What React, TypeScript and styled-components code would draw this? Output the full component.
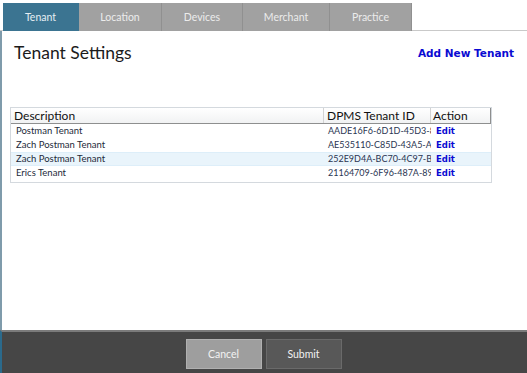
import React from "react";
import styled, { createGlobalStyle } from "styled-components";

const Global = createGlobalStyle`
  html, body { margin: 0; padding: 0; background: #ffffff; }
  body { font-family: Lato, "Open Sans", sans-serif; }
`;

const Page = styled.div`
  width: 527px;
  height: 373px;
  display: flex;
  flex-direction: column;
  overflow: hidden;
  background: #ffffff;
`;

const TabBar = styled.div`
  display: flex;
  height: 31px;
  padding: 3px 0 0 3px;
  box-sizing: border-box;
  border-bottom: 1px solid #c9c9c9;
`;

const Tab = styled.div<{ $active?: boolean; $w: number }>`
  width: ${(p) => p.$w}px;
  height: 28px;
  display: flex;
  align-items: center;
  justify-content: center;
  font-family: Lato, sans-serif;
  font-size: 10.5px;
  color: ${(p) => (p.$active ? "#e6eef3" : "#ececec")};
  background: ${(p) => (p.$active ? "#3b7491" : "#a1a1a1")};
  border-right: 1px solid ${(p) => (p.$active ? "#3b7491" : "#909090")};
  box-sizing: border-box;
`;

const Body = styled.div`
  flex: 1;
  display: flex;
  flex-direction: column;
  border-left: 2px solid #7f9bab;
  padding: 0 0 0 8px;
`;

const HeaderRow = styled.div`
  display: flex;
  justify-content: space-between;
  align-items: center;
  padding: 9px 13px 0 4px;
  height: 24px;
`;

const Title = styled.h1`
  margin: 0;
  font-family: Lato, sans-serif;
  font-weight: 400;
  font-size: 17.5px;
  color: #1b1b1b;
`;

const AddLink = styled.a`
  font-family: "DejaVu Sans", Verdana, sans-serif;
  font-weight: 700;
  font-size: 10.5px;
  color: #0a0ad2;
  text-decoration: none;
  margin-top: 2px;
`;

const Grid = styled.div`
  margin-top: 43px;
  width: 482px;
  border: 1px solid #d4d9de;
  box-sizing: border-box;
  padding-bottom: 2px;
`;

const cols = "313px 107px 60px";

const GridHead = styled.div`
  display: grid;
  grid-template-columns: ${cols};
  height: 16px;
  box-sizing: border-box;
  background: linear-gradient(#ffffff, #f1f2f3);
  border-bottom: 1px solid #8e8f8f;
`;

const HeadCell = styled.div<{ $last?: boolean }>`
  font-family: Lato, sans-serif;
  font-size: 12px;
  color: #111;
  padding-left: ${(p) => (p.$last ? 2 : 3)}px;
  line-height: 15px;
  border-right: 1px solid ${(p) => (p.$last ? "#8e8f8f" : "#d3d3d3")};
  white-space: nowrap;
  overflow: hidden;
`;

const Rows = styled.div`
  display: flex;
  flex-direction: column;
`;

const Row = styled.div<{ $sel?: boolean }>`
  display: grid;
  grid-template-columns: ${cols};
  height: 14px;
  box-sizing: border-box;
  align-items: center;
  background: ${(p) => (p.$sel ? "#e9f4fb" : "transparent")};
  border-top: 1px solid ${(p) => (p.$sel ? "#ddeef9" : "transparent")};
  border-bottom: 1px solid ${(p) => (p.$sel ? "#ddeef9" : "transparent")};
`;

const Cell = styled.div`
  font-family: Lato, sans-serif;
  font-size: 9.5px;
  line-height: 12px;
  color: #1d2a3a;
  padding-left: 5px;
  white-space: nowrap;
  overflow: hidden;
  text-overflow: clip;
`;

const IdCell = styled(Cell)`
  font-size: 9px;
  padding-left: 4px;
  color: #2a3552;
`;

const Edit = styled.a`
  font-family: "DejaVu Sans", Verdana, sans-serif;
  font-weight: 700;
  font-size: 8.5px;
  line-height: 12px;
  color: #0a0ad2;
  padding-left: 5px;
  text-decoration: none;
`;

const Footer = styled.div`
  height: 43px;
  background: #464646;
  border-top: 2px solid #7b7b7b;
  border-left: 2px solid #2b6a8c;
  display: flex;
  justify-content: center;
  align-items: center;
  gap: 4px;
  box-sizing: border-box;
  padding-top: 2px;
  padding-right: 2px;
`;

const Btn = styled.button<{ $primary?: boolean }>`
  width: 76px;
  height: 30px;
  font-family: Lato, sans-serif;
  font-size: 10.5px;
  color: #f2f2f2;
  background: ${(p) => (p.$primary ? "#585858" : "#9e9e9e")};
  border: 1px solid ${(p) => (p.$primary ? "#6a6a6a" : "#b0b0b0")};
  border-radius: 0;
  padding: 0;
`;

const tabs = [
  { label: "Tenant", w: 76, active: true },
  { label: "Location", w: 83 },
  { label: "Devices", w: 81 },
  { label: "Merchant", w: 87 },
  { label: "Practice", w: 82 },
];

const data = [
  { d: "Postman Tenant", id: "AADE16F6-6D1D-45D3-8E" },
  { d: "Zach Postman Tenant", id: "AE535110-C85D-43A5-A5" },
  { d: "Zach Postman Tenant", id: "252E9D4A-BC70-4C97-BB", sel: true },
  { d: "Erics Tenant", id: "21164709-6F96-487A-897" },
];

export default function App() {
  return (
    <Page>
      <Global />
      <TabBar>
        {tabs.map((t) => (
          <Tab key={t.label} $active={t.active} $w={t.w}>
            {t.label}
          </Tab>
        ))}
      </TabBar>
      <Body>
        <HeaderRow>
          <Title>Tenant Settings</Title>
          <AddLink>Add New Tenant</AddLink>
        </HeaderRow>
        <Grid>
          <GridHead>
            <HeadCell>Description</HeadCell>
            <HeadCell>DPMS Tenant ID</HeadCell>
            <HeadCell $last>Action</HeadCell>
          </GridHead>
          <Rows>
            {data.map((r, i) => (
              <Row key={i} $sel={r.sel}>
                <Cell>{r.d}</Cell>
                <IdCell>{r.id}</IdCell>
                <Edit>Edit</Edit>
              </Row>
            ))}
          </Rows>
        </Grid>
      </Body>
      <Footer>
        <Btn>Cancel</Btn>
        <Btn $primary>Submit</Btn>
      </Footer>
    </Page>
  );
}
